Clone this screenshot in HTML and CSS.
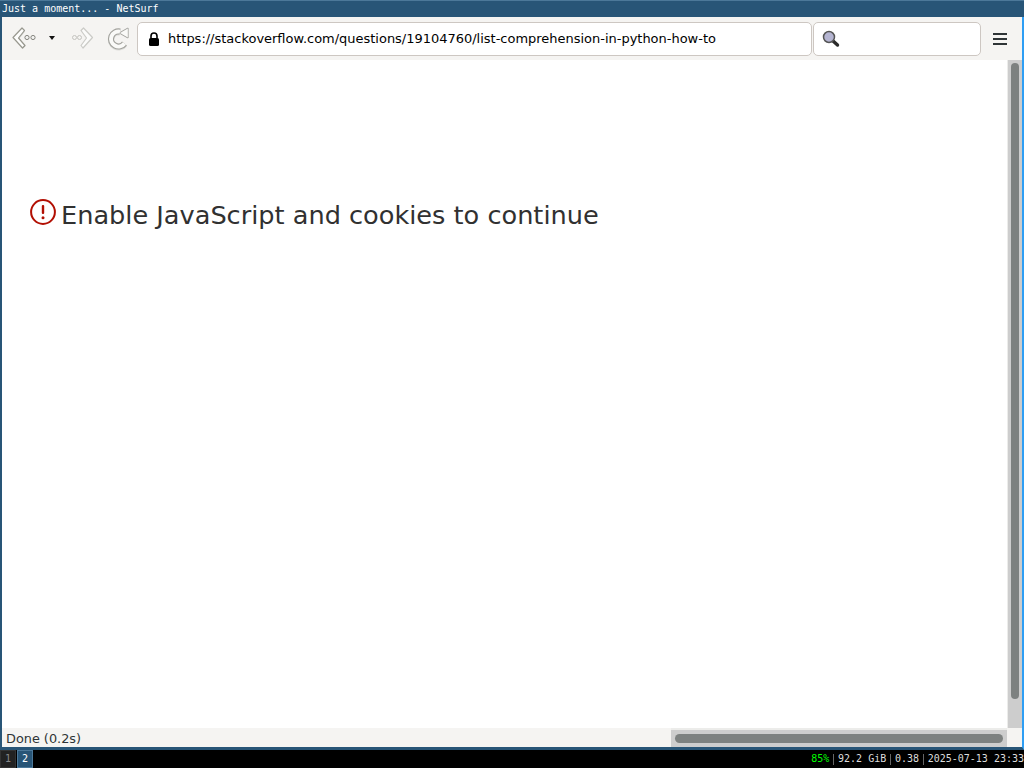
FILE: index.html
```html
<!DOCTYPE html>
<html lang="en">
<head>
<meta charset="utf-8">
<title>Just a moment... - NetSurf</title>
<link rel="stylesheet" href="styles.css">
</head>
<body>
<div class="window">
  <div class="titlebar">Just a moment... - NetSurf</div>
  <div class="frame">
    <div class="toolbar">
      <svg class="ic back" width="24" height="25" viewBox="0 0 24 25"><path d="M10 3 2 12.500l9 10 2.500-2.500-6-7.500 5.500-7z" fill="#d0d0cc"/><path d="M10 2 1 11.500 10.500 22 13 19.500 6.500 12 12.500 4.500z" fill="#fdfdfc" stroke="#98988f" stroke-width="1.200" stroke-linejoin="round"/><circle cx="15" cy="11.500" r="2.100" fill="#f3f3f1" stroke="#85857f"/><circle cx="21" cy="11.500" r="2.100" fill="#f3f3f1" stroke="#85857f"/></svg>
      <svg class="ic caret" width="8" height="5" viewBox="0 0 8 5"><path d="M1 0h6L4 4z" fill="#111"/></svg>
      <svg class="ic fwd" width="24" height="25" viewBox="0 0 24 25"><circle cx="3.500" cy="11.500" r="2" fill="#f5f4f2" stroke="#c4c4c0"/><circle cx="8.500" cy="11.500" r="2" fill="#f5f4f2" stroke="#c4c4c0"/><path d="M12.500 2 21.500 11.500 12 22 10 19.500 15.500 12 10 4.500z" fill="#fbfbfa" stroke="#cbcbc7" stroke-width="1.200" stroke-linejoin="round"/></svg>
      <svg class="ic reload" width="22" height="25" viewBox="0 0 22 25"><path d="M13 6.600A7.500 7.500 0 1 0 17.500 18.500" fill="none" stroke="#dededb" stroke-width="6.200"/><path d="M13 5.600A7.500 7.500 0 1 0 17.500 17.500" fill="none" stroke="#a2a29d" stroke-width="6.200"/><path d="M13 7 20.800 2.500 20.800 11.500z" fill="#a2a29d" stroke="#a2a29d" stroke-width="1.600" stroke-linejoin="round"/><path d="M13 5.600A7.500 7.500 0 1 0 17.500 17.500" fill="none" stroke="#fafaf8" stroke-width="4"/><path d="M13 7 20.800 2.500 20.800 11.500z" fill="#fafaf8"/></svg>
      <div class="entry url">
        <svg class="lock" width="12" height="14" viewBox="0 0 12 14"><path d="M3 6V4a3 3 0 0 1 6 0v2" fill="none" stroke="#000" stroke-width="1.600"/><rect x="1" y="6" width="10" height="8" rx="1.500" fill="#000"/></svg>
        <span>https://stackoverflow.com/questions/19104760/list-comprehension-in-python-how-to</span>
      </div>
      <div class="entry search">
        <svg width="18" height="18" viewBox="0 0 18 18"><path d="M10.500 10.500l5 4.500" stroke="#2a2a2a" stroke-width="3.400" stroke-linecap="round"/><circle cx="7" cy="7" r="5.500" fill="#b5b5d2" stroke="#555" stroke-width="1.500"/></svg>
      </div>
      <div class="menu"><i></i><i></i><i></i></div>
    </div>
    <div class="view">
      <main class="content">
        <h1 class="msg">
          <svg class="alert" width="26" height="26" viewBox="0 0 26 26"><circle cx="13" cy="13" r="11.900" fill="none" stroke="#b20f03" stroke-width="2"/><rect x="11.800" y="6" width="2.400" height="9" rx="1" fill="#b20f03"/><circle cx="13" cy="18.800" r="1.500" fill="#b20f03"/></svg>
          <span>Enable JavaScript and cookies to continue</span>
        </h1>
      </main>
      <div class="vscroll"><div class="vthumb"></div></div>
    </div>
    <div class="statusrow">
      <div class="status">Done (0.2s)</div>
      <div class="hscroll"><div class="hthumb"></div></div>
      <div class="corner"></div>
    </div>
  </div>
  <div class="bar">
    <div class="workspaces"><span class="ws">1</span><span class="ws active">2</span></div>
    <div class="stats"><span class="good">85%</span><span>92.2 GiB</span><span>0.38</span><span>2025-07-13 23:33</span></div>
  </div>
</div>
</body>
</html>
```
FILE: styles.css
```css
html, body { margin: 0; padding: 0; background: #000; }
.window { width: 1024px; height: 768px; display: flex; flex-direction: column; overflow: hidden; }
.titlebar {
  height: 17px; box-sizing: border-box; flex: none;
  background: #285577; border-top: 1px solid #4c7899; padding-left: 2px;
  color: #fff; font: 10px/15px "DejaVu Sans Mono", monospace; white-space: pre;
}
.frame {
  flex: none; height: 733px; box-sizing: border-box; display: flex; flex-direction: column;
  border-left: 2px solid #285577; border-right: 2px solid #2e9ef4; border-bottom: 3px solid #285577;
  background: #fff; font-family: "DejaVu Sans", sans-serif;
}
.toolbar { height: 43px; flex: none; background: #f5f4f2; display: flex; align-items: center; }
.ic { flex: none; }
.back { margin-left: 10px; }
.caret { margin-left: 12px; }
.fwd { margin-left: 15px; }
.reload { margin-left: 12px; }
.entry {
  box-sizing: border-box; height: 34px; background: #fff; border: 1px solid #cdc7c2; border-radius: 5px;
  display: flex; align-items: center; flex: none;
}
.url { width: 675px; margin-left: 8px; padding-left: 10px; font-size: 12.98px; color: #000; }
.url span { margin-left: 8px; white-space: nowrap; }
.search { width: 168px; margin-left: 1px; padding-left: 8px; }
.menu { margin-left: 12px; width: 14px; display: flex; flex-direction: column; gap: 3px; }
.menu i { display: block; height: 2px; background: #2e3436; }
.view { flex: none; height: 668px; display: flex; }
.content { flex: 1; min-width: 0; background: #fff; padding: 140px 0 0 28px; }
.msg { margin: 0; display: flex; align-items: center; gap: 5px; font-weight: 400; font-size: 25.6px; line-height: 30px; color: #313131; }
.alert { flex: none; position: relative; top: -3px; }
.vscroll { width: 15px; flex: none; background: #cdcdcd; box-sizing: border-box; padding: 3px 3px 0 3px; border-left: 1px solid #ececea; }
.vthumb { width: 8px; height: 636px; background: #7d8180; border-radius: 4px; }
.statusrow { flex: none; height: 19px; display: flex; background: #f5f4f2; }
.status { width: 669px; flex: none; box-sizing: border-box; padding-left: 4px; font-size: 12.85px; line-height: 21px; color: #2e3436; }
.hscroll { width: 336px; flex: none; background: #cdcdcd; box-sizing: border-box; padding: 4px 4px 0 4px; border-top: 2px solid #ececea; }
.hthumb { height: 9px; background: #7d8180; border-radius: 5px; }
.corner { flex: 1; }
.bar { flex: 1; background: #000; display: flex; justify-content: space-between; font: 10px/18px "DejaVu Sans Mono", monospace; color: #ddd; }
.workspaces { display: flex; }
.ws { width: 16px; height: 18px; box-sizing: border-box; text-align: center; background: #222; color: #888; border: 1px solid #333; line-height: 16px; }
.ws.active { background: #285577; color: #fff; border-color: #4c7899; margin-left: 1px; }
.stats { display: flex; }
.stats span { padding: 0 3.7px 0 5px; position: relative; }
.stats span + span::before { content: ""; position: absolute; left: 0; top: 4px; height: 11px; width: 1px; background: #666; }
.stats span:last-child { padding-right: 0; white-space: nowrap; }
.good { color: #0f0; }
```
